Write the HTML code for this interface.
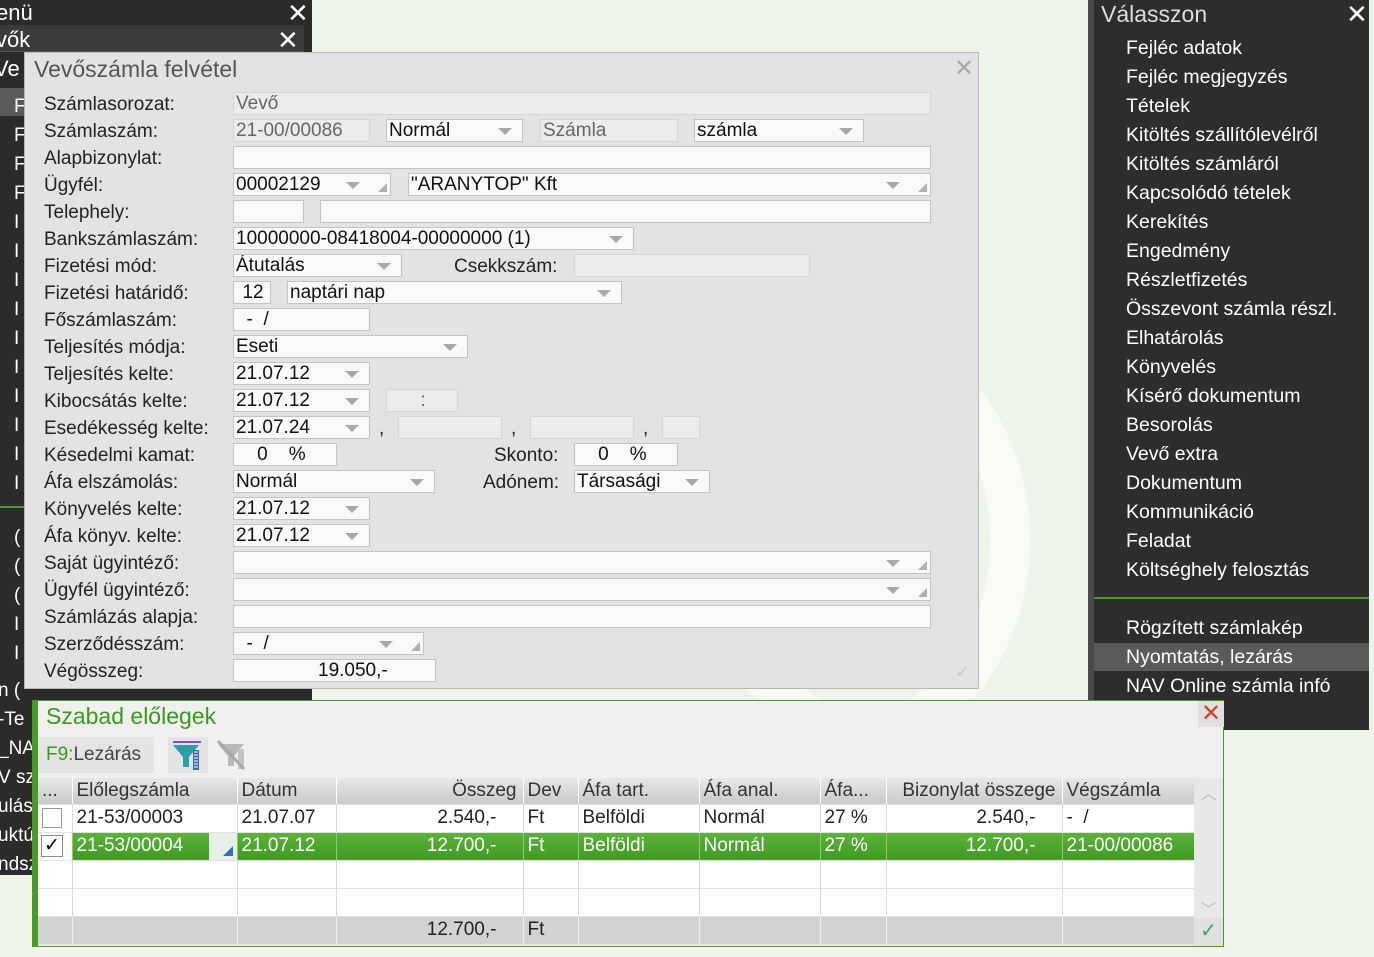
<!DOCTYPE html>
<html><head><meta charset="utf-8"><style>
*{margin:0;padding:0;box-sizing:border-box}
body{width:1374px;height:957px;overflow:hidden;background:#eef4ea;font-family:"Liberation Sans",sans-serif;position:relative;color:#222}
.a{position:absolute}
.lp{left:0;top:0;width:312px;height:875px;background:#2b2b2b}
.rp{left:1088px;top:0;width:281px;height:730px;background:#2d2d2d;border-left:6px solid #4a4a4a}
.rp div{position:absolute;left:32px;color:#fff;font-size:19.5px;white-space:nowrap}
.dlg{left:24px;top:52px;width:955px;height:637px;background:#e3e3e3;border:1px solid #b8b8b8}
.lb{position:absolute;left:19px;font-size:19px;color:#222;white-space:nowrap}
.i{position:absolute;height:23px;border:1px solid #c4c4c4;background:#f9f9f9;font-size:19px;line-height:22px;padding-left:2px;color:#111;white-space:pre;overflow:hidden}
.d{background:#ececec;border-color:#d6d6d6;color:#666}
.dd::after{content:"";position:absolute;right:10px;top:8px;border-left:7px solid transparent;border-right:7px solid transparent;border-top:7px solid #a8a8a8}
.g::before{content:"";position:absolute;right:3px;bottom:3px;border-left:9px solid transparent;border-bottom:9px solid #b0b0b0}
.g.dd::after{right:30px}
.bd{left:32px;top:700px;width:1192px;height:247px;background:#f0f0f0;border:1px solid #4a9a2a;border-left:6px solid #4a9a2a}
table{position:absolute;left:0;top:77px;border-collapse:collapse;table-layout:fixed;width:1156px;font-size:19px}
td{height:28px;border-right:1px solid #d8d8d8;border-bottom:1px solid #e2e2e2;padding:0 4px;white-space:nowrap;overflow:hidden;background:#fff}
tr.h td{height:26px;background:linear-gradient(#e8e8e8,#c9c9c9);border-right:1px solid #fff;color:#333}
tr.s td{background:linear-gradient(#5cb33a,#3f9a22);color:#fff;border-right:1px solid #8ccc70}
tr.f td{background:#d2d2d2;border-right:1px solid #eee}
.r{text-align:right;padding-right:26px}
tr.h td.r{padding-right:6px}
</style></head><body>
<div class="a" style="left:700px;top:330px;width:330px;height:420px;border-radius:50%;border:40px solid #f7faf5"></div>
<div class="a lp">
 <div class="a" style="left:0;top:0;font-size:22px;color:#fff;left:-4px">enü</div>
 <div class="a" style="left:287px;top:-2px;font-size:26px;color:#fff">✕</div>
 <div class="a" style="left:0;top:25px;width:304px;height:27px;background:#3a3a3a;border-bottom:1px solid #555"></div>
 <div class="a" style="left:-4px;top:27px;font-size:22px;color:#fff">vők</div>
 <div class="a" style="left:277px;top:25px;font-size:26px;color:#fff">✕</div>
 <div class="a" style="left:-6px;top:56px;font-size:22px;color:#fff">Ve</div>
 <div class="a" style="left:0;top:88px;width:24px;height:28px;background:#5a5a5a"></div>
 <div class="a" style="left:14px;top:92px;font-size:19px;color:#fff;line-height:29px">F<br>F<br>F<br>F<br>I<br>I<br>I<br>I<br>I<br>I<br>I<br>I<br>I<br>I</div>
 <div class="a" style="left:0;top:506px;width:24px;height:2px;background:#4a9a2a"></div>
 <div class="a" style="left:14px;top:523px;font-size:19px;color:#fff;line-height:29px">(<br>(<br>(<br>I<br>I</div>
 <div class="a" style="left:-2px;top:676px;font-size:19px;color:#fff;line-height:29px">n (<br>-Te<br>_NA<br>V sz<br>ulás<br>uktú<br>ndsz</div>
</div>
<div class="a rp">
 <div style="left:7px;top:1px;font-size:23px;color:#ddd">Válasszon</div>
 <div style="left:252px;top:-1px;font-size:26px">✕</div>
 <div style="top:37px">Fejléc adatok</div>
 <div style="top:66px">Fejléc megjegyzés</div>
 <div style="top:95px">Tételek</div>
 <div style="top:124px">Kitöltés szállítólevélről</div>
 <div style="top:153px">Kitöltés számláról</div>
 <div style="top:182px">Kapcsolódó tételek</div>
 <div style="top:211px">Kerekítés</div>
 <div style="top:240px">Engedmény</div>
 <div style="top:269px">Részletfizetés</div>
 <div style="top:298px">Összevont számla részl.</div>
 <div style="top:327px">Elhatárolás</div>
 <div style="top:356px">Könyvelés</div>
 <div style="top:385px">Kísérő dokumentum</div>
 <div style="top:414px">Besorolás</div>
 <div style="top:443px">Vevő extra</div>
 <div style="top:472px">Dokumentum</div>
 <div style="top:501px">Kommunikáció</div>
 <div style="top:530px">Feladat</div>
 <div style="top:559px">Költséghely felosztás</div>
 <div style="left:0;top:597px;width:275px;height:2px;background:#4a9a2a"></div>
 <div style="top:617px">Rögzített számlakép</div>
 <div style="left:0;top:643px;width:275px;height:28px;background:#5a5a5a"></div>
 <div style="top:646px">Nyomtatás, lezárás</div>
 <div style="top:675px">NAV Online számla infó</div>
</div>
<div class="a dlg">
 <div class="a" style="left:9px;top:3px;font-size:23px;color:#555">Vevőszámla felvétel</div>
 <div class="a" style="left:929px;top:1px;font-size:24px;color:#aaa">✕</div>
 <div class="lb" style="top:41px">Számlasorozat:</div>
 <div class="lb" style="top:68px">Számlaszám:</div>
 <div class="lb" style="top:95px">Alapbizonylat:</div>
 <div class="lb" style="top:122px">Ügyfél:</div>
 <div class="lb" style="top:149px">Telephely:</div>
 <div class="lb" style="top:176px">Bankszámlaszám:</div>
 <div class="lb" style="top:203px">Fizetési mód:</div>
 <div class="lb" style="top:230px">Fizetési határidő:</div>
 <div class="lb" style="top:257px">Főszámlaszám:</div>
 <div class="lb" style="top:284px">Teljesítés módja:</div>
 <div class="lb" style="top:311px">Teljesítés kelte:</div>
 <div class="lb" style="top:338px">Kibocsátás kelte:</div>
 <div class="lb" style="top:365px">Esedékesség kelte:</div>
 <div class="lb" style="top:392px">Késedelmi kamat:</div>
 <div class="lb" style="top:419px">Áfa elszámolás:</div>
 <div class="lb" style="top:446px">Könyvelés kelte:</div>
 <div class="lb" style="top:473px">Áfa könyv. kelte:</div>
 <div class="lb" style="top:500px">Saját ügyintéző:</div>
 <div class="lb" style="top:527px">Ügyfél ügyintéző:</div>
 <div class="lb" style="top:554px">Számlázás alapja:</div>
 <div class="lb" style="top:581px">Szerződésszám:</div>
 <div class="lb" style="top:608px">Végösszeg:</div>
 <div class="lb" style="left:429px;top:203px">Csekkszám:</div>
 <div class="lb" style="left:469px;top:392px">Skonto:</div>
 <div class="lb" style="left:458px;top:419px">Adónem:</div>
 <div class="lb" style="left:354px;top:365px">,</div>
 <div class="lb" style="left:486px;top:365px">,</div>
 <div class="lb" style="left:618px;top:365px">,</div>
</div>
<div class="i d" style="left:233px;top:92px;width:698px">Vevő</div>
<div class="i d" style="left:233px;top:119px;width:137px">21-00/00086</div>
<div class="i dd" style="left:386px;top:119px;width:137px">Normál</div>
<div class="i d" style="left:540px;top:119px;width:138px">Számla</div>
<div class="i dd" style="left:694px;top:119px;width:170px">számla</div>
<div class="i" style="left:233px;top:146px;width:698px"></div>
<div class="i dd g" style="left:233px;top:173px;width:158px">00002129</div>
<div class="i dd g" style="left:408px;top:173px;width:523px">"ARANYTOP" Kft</div>
<div class="i" style="left:233px;top:200px;width:71px"></div>
<div class="i" style="left:320px;top:200px;width:611px"></div>
<div class="i dd" style="left:233px;top:227px;width:401px">10000000-08418004-00000000 (1)</div>
<div class="i dd" style="left:233px;top:254px;width:169px">Átutalás</div>
<div class="i d" style="left:574px;top:254px;width:236px"></div>
<div class="i" style="left:233px;top:281px;width:38px;text-align:center">12</div>
<div class="i dd" style="left:287px;top:281px;width:335px">naptári nap</div>
<div class="i" style="left:233px;top:308px;width:137px">  -  /</div>
<div class="i dd" style="left:233px;top:335px;width:235px">Eseti</div>
<div class="i dd" style="left:233px;top:362px;width:137px">21.07.12</div>
<div class="i dd" style="left:233px;top:389px;width:137px">21.07.12</div>
<div class="i d" style="left:386px;top:389px;width:72px;text-align:center">:</div>
<div class="i dd" style="left:233px;top:416px;width:137px">21.07.24</div>
<div class="i d" style="left:398px;top:416px;width:104px"></div>
<div class="i d" style="left:530px;top:416px;width:104px"></div>
<div class="i d" style="left:662px;top:416px;width:38px"></div>
<div class="i" style="left:233px;top:443px;width:104px">    0    %</div>
<div class="i" style="left:574px;top:443px;width:104px">    0    %</div>
<div class="i dd" style="left:233px;top:470px;width:202px">Normál</div>
<div class="i dd" style="left:574px;top:470px;width:136px">Társasági</div>
<div class="i dd" style="left:233px;top:497px;width:137px">21.07.12</div>
<div class="i dd" style="left:233px;top:524px;width:137px">21.07.12</div>
<div class="i dd g" style="left:233px;top:551px;width:698px"></div>
<div class="i dd g" style="left:233px;top:578px;width:698px"></div>
<div class="i" style="left:233px;top:605px;width:698px"></div>
<div class="i dd g" style="left:233px;top:632px;width:191px">  -  /</div>
<div class="i" style="left:233px;top:659px;width:203px;padding-left:84px">19.050,-</div>
<div class="a" style="left:955px;top:662px;font-size:18px;color:#ccc">✓</div>

<div class="a bd">
 <div class="a" style="left:8px;top:2px;font-size:23px;color:#3a9a1a">Szabad előlegek</div>
 <div class="a" style="left:1160px;top:0;width:26px;height:26px;background:#e0e0e0;color:#d9412b;font-size:24px;line-height:26px;text-align:center">✕</div>
 <div class="a" style="left:0;top:36px;width:116px;height:36px;background:#e4e4e4;font-size:19px;line-height:36px;padding-left:8px;color:#444"><span style="color:#3a9a1a">F9:</span>Lezárás</div>
 <div class="a" style="left:130px;top:36px;width:40px;height:36px;background:#e4e4e4">
  <svg width="40" height="36"><rect x="5" y="4" width="28" height="2" fill="#8a4fc0"/><path d="M5 8h26l-10 12v10h-6V20z" fill="#2aa0a8"/><rect x="25" y="13" width="6" height="20" fill="#3a6ab0"/><path d="M26 15h4M26 18h4M26 21h4M26 24h4M26 27h4M26 30h4" stroke="#fff"/></svg>
 </div>
 <div class="a" style="left:176px;top:36px;width:36px;height:36px">
  <svg width="36" height="36"><path d="M4 7h26l-10 12v10h-6V19z" fill="#b8b8b8"/><rect x="24" y="12" width="6" height="20" fill="#c4c4c4"/><path d="M4 4L30 32" stroke="#a8a8a8" stroke-width="3"/></svg>
 </div>
 <table>
  <colgroup><col style="width:34px"><col style="width:165px"><col style="width:99px"><col style="width:187px"><col style="width:55px"><col style="width:121px"><col style="width:121px"><col style="width:66px"><col style="width:176px"><col style="width:132px"></colgroup>
  <tr class="h"><td>...</td><td>Előlegszámla</td><td>Dátum</td><td class="r">Összeg</td><td>Dev</td><td>Áfa tart.</td><td>Áfa anal.</td><td>Áfa...</td><td class="r">Bizonylat összege</td><td>Végszámla</td></tr>
  <tr><td><div style="width:20px;height:20px;border:1px solid #999;background:#fff"></div></td><td>21-53/00003</td><td>21.07.07</td><td class="r">2.540,-</td><td>Ft</td><td>Belföldi</td><td>Normál</td><td>27 %</td><td class="r">2.540,-</td><td>-&nbsp; /</td></tr>
  <tr class="s"><td style="background:#fff;padding:0 3px"><div style="width:22px;height:22px;border:1px solid #888;background:#fff;color:#000;font-size:19px;line-height:20px;text-align:center">✓</div></td><td style="position:relative">21-53/00004<div style="position:absolute;right:0;top:0;width:28px;height:28px;background:#e6efe6"><div style="position:absolute;right:4px;bottom:5px;border-left:10px solid transparent;border-bottom:10px solid #2f6fc0"></div></div></td><td>21.07.12</td><td class="r">12.700,-</td><td>Ft</td><td>Belföldi</td><td>Normál</td><td>27 %</td><td class="r">12.700,-</td><td>21-00/00086</td></tr>
  <tr><td></td><td></td><td></td><td></td><td></td><td></td><td></td><td></td><td></td><td></td></tr>
  <tr><td></td><td></td><td></td><td></td><td></td><td></td><td></td><td></td><td></td><td></td></tr>
  <tr class="f"><td></td><td></td><td></td><td class="r">12.700,-</td><td>Ft</td><td></td><td></td><td></td><td></td><td></td></tr>
 </table>
 <div class="a" style="left:1156px;top:77px;width:29px;height:140px;background:#e8e8e8;color:#bbb;font-size:16px;text-align:center"><div style="margin-top:2px">︿</div><div style="margin-top:92px">﹀</div></div>
 <div class="a" style="left:1156px;top:217px;width:29px;height:28px;background:#e0e0e0;color:#3aa060;font-size:20px;text-align:center">✓</div>
</div>
</body></html>
